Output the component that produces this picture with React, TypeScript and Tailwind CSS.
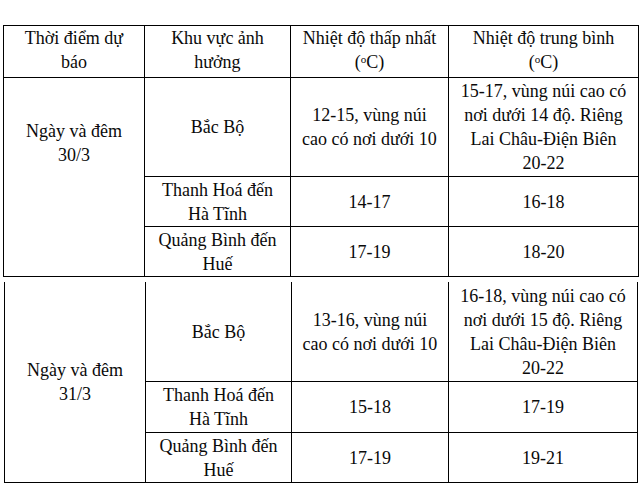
import React from "react";

function Cell({ children, className = "" }: { children: React.ReactNode; className?: string }) {
  return (
    <div className={`bg-white flex items-center justify-center text-center ${className}`}>
      <div>{children}</div>
    </div>
  );
}

function Deg() {
  return (
    <>
      (<sup className="text-[11px]">o</sup>C)
    </>
  );
}

type Row = { region: React.ReactNode; min: React.ReactNode; avg: React.ReactNode };

function Block({
  date,
  rows,
  dateClass,
}: {
  date: React.ReactNode;
  rows: Row[];
  dateClass: string;
}) {
  return (
    <>
      <div className={`bg-white row-span-3 flex justify-center text-center ${dateClass}`}>
        <div>{date}</div>
      </div>
      {rows.map((r, i) => (
        <React.Fragment key={i}>
          <Cell>{r.region}</Cell>
          <Cell>{r.min}</Cell>
          <Cell>{r.avg}</Cell>
        </React.Fragment>
      ))}
    </>
  );
}

export default function App() {
  const rows1: Row[] = [
    {
      region: "Bắc Bộ",
      min: (
        <>
          12-15, vùng núi
          <br />
          cao có nơi dưới 10
        </>
      ),
      avg: (
        <>
          15-17, vùng núi cao có
          <br />
          nơi dưới 14 độ. Riêng
          <br />
          Lai Châu-Điện Biên
          <br />
          20-22
        </>
      ),
    },
    {
      region: (
        <>
          Thanh Hoá đến
          <br />
          Hà Tĩnh
        </>
      ),
      min: "14-17",
      avg: "16-18",
    },
    {
      region: (
        <>
          Quảng Bình đến
          <br />
          Huế
        </>
      ),
      min: "17-19",
      avg: "18-20",
    },
  ];
  const rows2: Row[] = [
    {
      region: "Bắc Bộ",
      min: (
        <>
          13-16, vùng núi
          <br />
          cao có nơi dưới 10
        </>
      ),
      avg: (
        <>
          16-18, vùng núi cao có
          <br />
          nơi dưới 15 độ. Riêng
          <br />
          Lai Châu-Điện Biên
          <br />
          20-22
        </>
      ),
    },
    {
      region: (
        <>
          Thanh Hoá đến
          <br />
          Hà Tĩnh
        </>
      ),
      min: "15-18",
      avg: "17-19",
    },
    {
      region: (
        <>
          Quảng Bình đến
          <br />
          Huế
        </>
      ),
      min: "17-19",
      avg: "19-21",
    },
  ];

  return (
    <div className="w-[642px] h-[486px] overflow-hidden bg-white text-[#0a0a0a] text-[18px] leading-[24px] font-['Liberation_Serif']">
      <div className="pt-[25px] pl-[3px]">
        <div className="inline-grid bg-black p-px gap-px grid-cols-[140px_145px_157px_189px] grid-rows-[51px_98px_49px_49px]">
          <div className="bg-white flex justify-center text-center items-start">
            <div>
              Thời điểm dự
              <br />
              báo
            </div>
          </div>
          <div className="bg-white flex justify-center text-center items-start">
            <div>
              Khu vực ảnh
              <br />
              hưởng
            </div>
          </div>
          <div className="bg-white flex justify-center text-center items-start">
            <div>
              Nhiệt độ thấp nhất
              <br />
              <Deg />
            </div>
          </div>
          <div className="bg-white flex justify-center text-center items-start">
            <div>
              Nhiệt độ trung bình
              <br />
              <Deg />
            </div>
          </div>
          <Block
            date={
              <>
                Ngày và đêm
                <br />
                30/3
              </>
            }
            rows={rows1}
            dateClass="items-start pt-[41px]"
          />
        </div>
      </div>
      <div className="pt-[5px] pl-[4px] flex">
        <div className="grid bg-black px-px pb-px gap-px grid-cols-[140px_145px_156px_188px] grid-rows-[99px_50px_49px]">
          <Block
            date={
              <>
                Ngày và đêm
                <br />
                31/3
              </>
            }
            rows={rows2}
            dateClass="items-center"
          />
        </div>
      </div>
    </div>
  );
}
